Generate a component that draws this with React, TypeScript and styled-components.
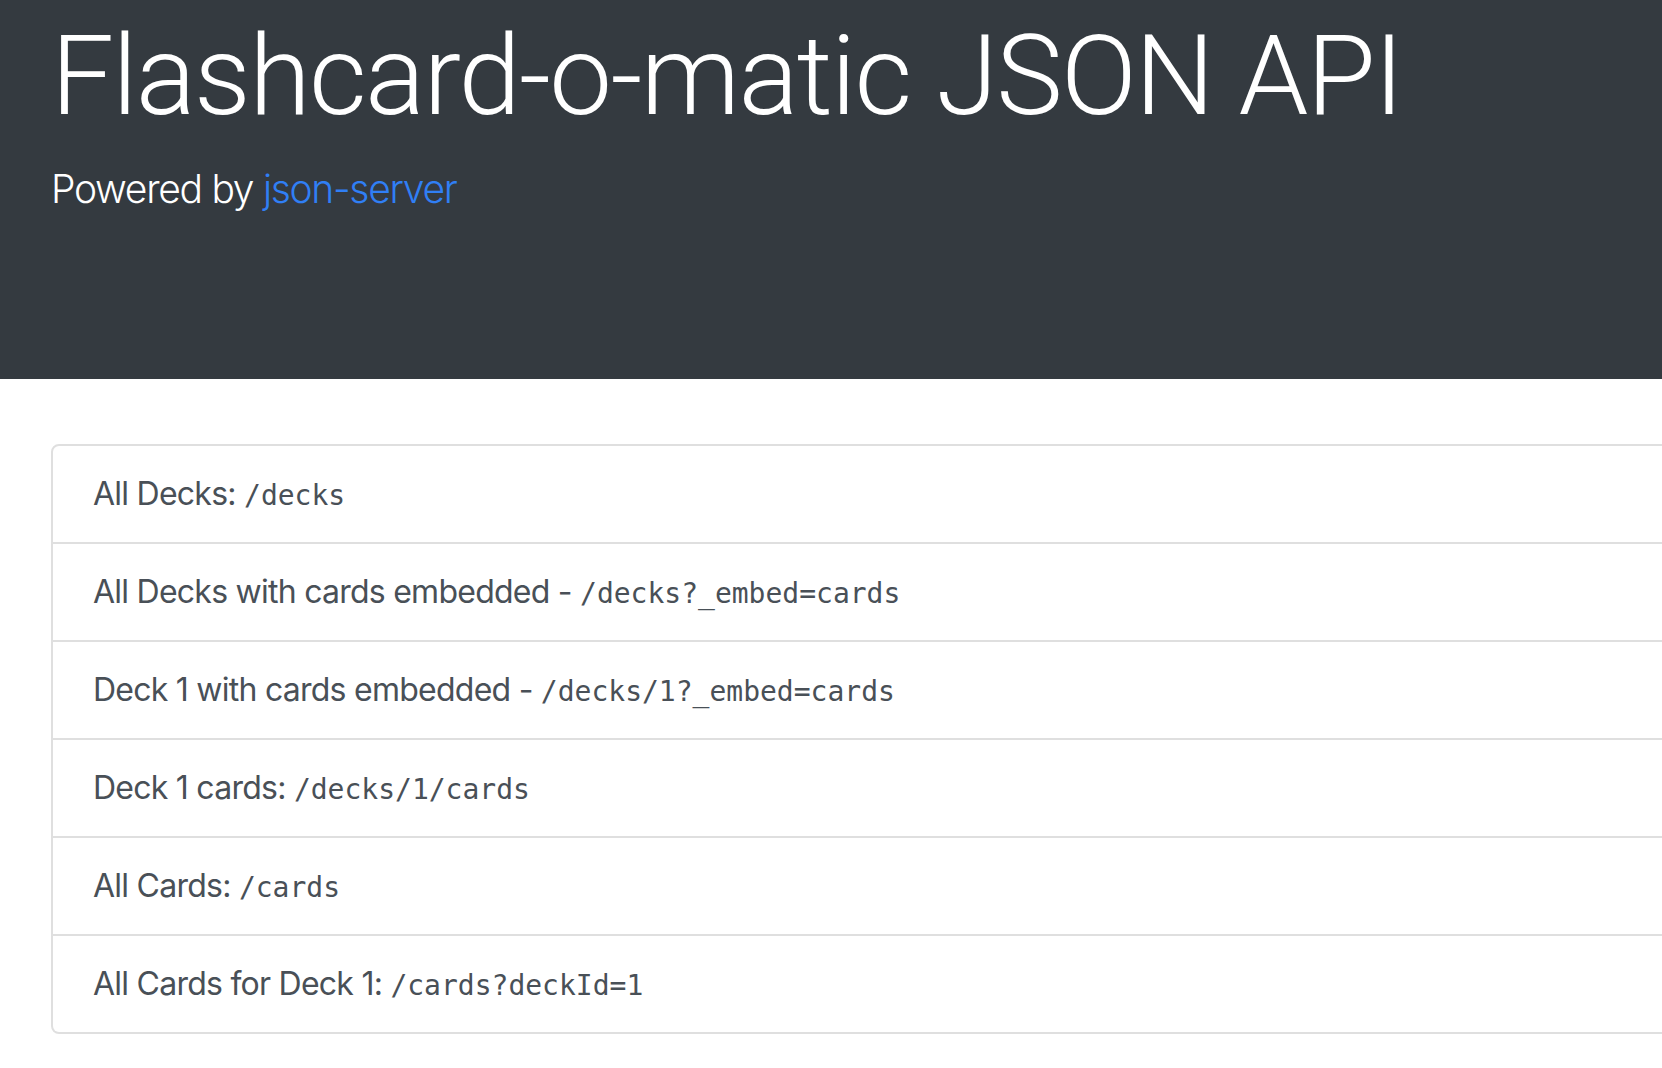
import React from "react";
import styled, { createGlobalStyle } from "styled-components";

const GlobalStyle = createGlobalStyle`
  html, body {
    margin: 0;
    padding: 0;
    background: #ffffff;
    overflow: hidden;
  }
  body {
    font-family: Inter, "Liberation Sans", Arial, sans-serif;
    color: #212529;
  }
  * { box-sizing: border-box; }
`;

const Page = styled.div`
  width: 100%;
  min-height: 1068px;
`;

const Jumbotron = styled.header`
  background: #343a40;
  color: #ffffff;
  padding: 9px 51px 160px;
`;

const Title = styled.h1`
  margin: 0 0 16px;
  font-family: Roboto, Inter, "Liberation Sans", sans-serif;
  font-size: 112px;
  font-weight: 300;
  line-height: 134.4px;
  letter-spacing: -1.7px;
  white-space: nowrap;
`;

const Lead = styled.p`
  margin: 0;
  font-size: 39px;
  font-weight: 300;
  line-height: 60px;
  letter-spacing: -1.3px;
`;

const Link = styled.a`
  color: #307ff5;
  text-decoration: none;
`;

const List = styled.ul`
  list-style: none;
  margin: 65px -40px 0 51px;
  padding: 0;
  display: flex;
  flex-direction: column;
`;

const Item = styled.li`
  padding: 24px 40px;
  font-size: 32px;
  line-height: 48px;
  letter-spacing: -0.75px;
  color: #495057;
  border: 2px solid #dfdfdf;
  border-top-width: 0;
  white-space: nowrap;
  &:first-child {
    border-top-width: 2px;
    border-top-left-radius: 8px;
    border-top-right-radius: 8px;
  }
  &:last-child {
    border-bottom-left-radius: 8px;
    border-bottom-right-radius: 8px;
  }
`;

const Code = styled.code`
  font-family: "DejaVu Sans Mono", "Liberation Mono", monospace;
  font-size: 28px;
  line-height: 1;
  letter-spacing: 0;
  color: #495057;
`;

const routes: { label: string; path: string }[] = [
  { label: "All Decks: ", path: "/decks" },
  { label: "All Decks with cards embedded - ", path: "/decks?_embed=cards" },
  { label: "Deck 1 with cards embedded - ", path: "/decks/1?_embed=cards" },
  { label: "Deck 1 cards: ", path: "/decks/1/cards" },
  { label: "All Cards: ", path: "/cards" },
  { label: "All Cards for Deck 1: ", path: "/cards?deckId=1" },
];

export default function App() {
  return (
    <Page>
      <GlobalStyle />
      <Jumbotron>
        <Title>Flashcard-o-matic JSON API</Title>
        <Lead>
          Powered by <Link href="#">json-server</Link>
        </Lead>
      </Jumbotron>
      <List>
        {routes.map((r) => (
          <Item key={r.path}>
            {r.label}
            <Code>{r.path}</Code>
          </Item>
        ))}
      </List>
    </Page>
  );
}
